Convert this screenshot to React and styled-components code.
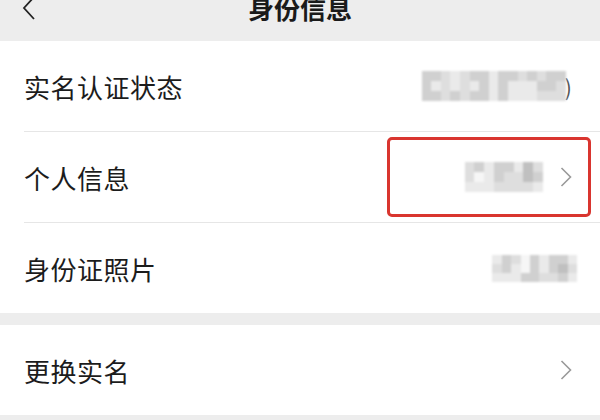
import styled, { createGlobalStyle } from "styled-components";

const GlobalStyle = createGlobalStyle`
  html, body {
    margin: 0;
    padding: 0;
    background: #ededed;
    font-family: "Noto Sans CJK SC", "Noto Sans", sans-serif;
  }
  #root {
    width: 600px;
    height: 420px;
    overflow: hidden;
  }
`;

const Page = styled.div`
  width: 600px;
  height: 420px;
  background: #ededed;
  overflow: hidden;
`;

const TopBar = styled.div`
  height: 16px;
  padding-bottom: 25px;
  padding-left: 22px;
  display: flex;
  align-items: center;
  position: relative;
`;

const BackButton = styled.div`
  display: flex;
  align-items: center;
`;

const Title = styled.h1`
  position: absolute;
  left: 0;
  right: 0;
  top: -6px;
  margin: 0;
  text-align: center;
  font-size: 26px;
  line-height: 28px;
  font-weight: 700;
  color: #1a1a1a;
`;

const Section = styled.div`
  background: #fff;
  margin-bottom: ${(props) => props.gap || 0}px;
`;

const Row = styled.div`
  height: 90px;
  display: flex;
  align-items: center;
  justify-content: space-between;
  padding: 0 28px 0 24px;
  position: relative;
`;

const Divider = styled.div`
  height: 1px;
  margin-left: 24px;
  background: #e6e6e6;
`;

const Label = styled.span`
  font-size: 26px;
  color: #1c1c1c;
  letter-spacing: 0.5px;
`;

const Value = styled.div`
  display: flex;
  align-items: center;
  gap: ${(props) => props.gap || 0}px;
  margin-right: ${(props) => props.shift || 0}px;
`;

const Mosaic = styled.div`
  display: grid;
  grid-template-columns: repeat(${(props) => props.cols}, ${(props) => props.cell}px);
  grid-auto-rows: ${(props) => props.cellH}px;
  filter: blur(0.8px);
`;

const Cell = styled.div`
  background: ${(props) => props.shade};
`;

const Paren = styled.span`
  font-size: 22px;
  color: #555;
  margin-left: -1px;
`;

const Highlight = styled.div`
  position: absolute;
  left: 387px;
  right: 9px;
  top: 5px;
  bottom: 5px;
  border: 3px solid #d9352f;
  border-radius: 5px;
  pointer-events: none;
`;

const shades = ["#f6f6f6", "#eaeaea", "#dedede", "#d0d0d0", "#c0c0c0"];

const Blurred = ({ pattern, cell, cellH }) => (
  <Mosaic cols={pattern[0].length} cell={cell} cellH={cellH}>
    {pattern.flat().map((v, i) => (
      <Cell key={i} shade={shades[v]} />
    ))}
  </Mosaic>
);

const Chevron = ({ color = "#9a9a9a" }) => (
  <svg width="12" height="22" viewBox="0 0 12 22" fill="none">
    <path d="M1.5 2 L10.5 11 L1.5 20" stroke={color} strokeWidth="1.6" />
  </svg>
);

const statusPattern = [
  [3, 3, 2, 1, 2, 3, 3, 1, 3, 3, 2, 3, 2, 3, 3],
  [3, 1, 2, 1, 2, 1, 3, 1, 3, 1, 1, 1, 3, 3, 2],
  [3, 3, 2, 3, 2, 3, 3, 1, 3, 1, 1, 1, 2, 2, 2],
];

const infoPattern = [
  [2, 3, 1, 3, 3, 1, 4, 2],
  [2, 0, 1, 3, 2, 2, 4, 3],
  [1, 1, 1, 2, 2, 2, 2, 1],
];

const photoPattern = [
  [1, 3, 2, 0, 3, 1, 3, 3, 1],
  [2, 3, 1, 0, 3, 1, 3, 4, 2],
  [1, 1, 1, 3, 3, 2, 2, 3, 1],
];

function App() {
  return (
    <>
      <GlobalStyle />
      <Page>
        <TopBar>
          <BackButton>
            <svg width="14" height="24" viewBox="0 0 14 24" fill="none">
              <path d="M12 1 L2 12 L12 23" stroke="#222" strokeWidth="1.8" />
            </svg>
          </BackButton>
          <Title>身份信息</Title>
        </TopBar>

        <Section gap={12}>
          <Row>
            <Label>实名认证状态</Label>
            <Value>
              <Blurred pattern={statusPattern} cell={9.6} cellH={10} />
              <Paren>)</Paren>
            </Value>
          </Row>
          <Divider />
          <Row>
            <Label>个人信息</Label>
            <Value gap={17}>
              <Blurred pattern={infoPattern} cell={9.8} cellH={10} />
              <Chevron />
            </Value>
            <Highlight />
          </Row>
          <Divider />
          <Row>
            <Label>身份证照片</Label>
            <Value shift={-5}>
              <Blurred pattern={photoPattern} cell={9.4} cellH={9} />
            </Value>
          </Row>
        </Section>

        <Section>
          <Row>
            <Label>更换实名</Label>
            <Chevron />
          </Row>
        </Section>
      </Page>
    </>
  );
}

export default App;
